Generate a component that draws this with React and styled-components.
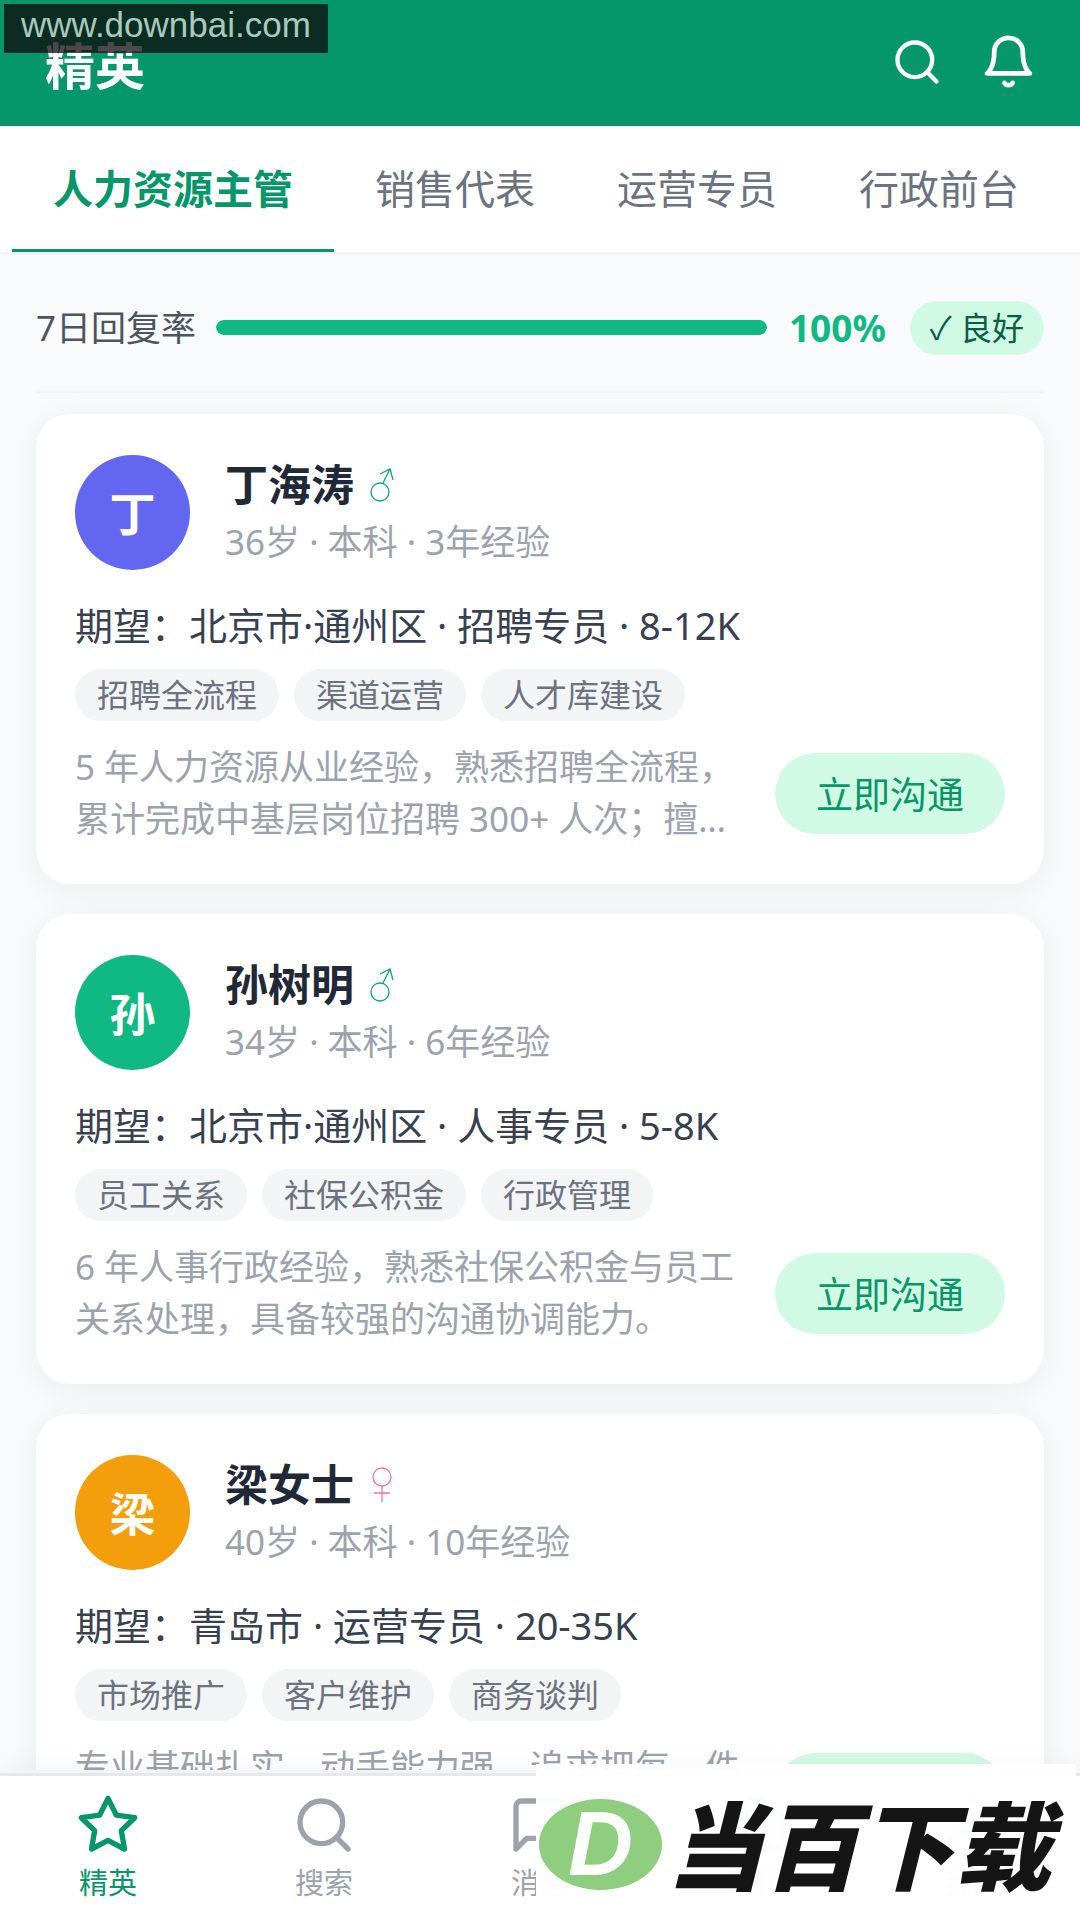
import React, { useState } from 'react';
import styled, { createGlobalStyle } from 'styled-components';

const GlobalStyle = createGlobalStyle`
  * {
    box-sizing: border-box;
  }

  body {
    margin: 0;
    background: #f9fafc;
    font-family: 'Noto Sans', 'Noto Sans CJK SC', sans-serif;
  }

  button {
    font-family: inherit;
    border: none;
    padding: 0;
    background: none;
    cursor: pointer;
  }

  h1,
  h2,
  p,
  ul {
    margin: 0;
    padding: 0;
  }
`;

const Page = styled.div`
  position: relative;
  height: 100vh;
  display: flex;
  flex-direction: column;
  overflow: hidden;
`;

const Header = styled.header`
  flex: none;
  display: flex;
  align-items: center;
  justify-content: space-between;
  height: 126px;
  padding: 0 43px 3px 45px;
  background: #059669;
  color: #fff;

  h1 {
    padding-top: 8px;
    font-size: 50px;
    line-height: 72px;
    font-weight: 700;
  }
`;

const HeaderActions = styled.div`
  display: flex;
  align-items: center;
  gap: 37px;

  button {
    display: flex;
    color: #fff;
  }
`;

const Tabs = styled.nav`
  flex: none;
  display: flex;
  height: 129px;
  padding: 0 12px;
  background: #fff;
  border-bottom: 3px solid #f3f4f6;
`;

const Tab = styled.button`
  flex: none;
  padding: 0 41px;
  font-size: 40px;
  line-height: 60px;
  white-space: nowrap;
  font-weight: ${({ $active }) => ($active ? 700 : 400)};
  color: ${({ $active }) => ($active ? '#059669' : '#6b7280')};
  border-top: 3px solid transparent;
  border-bottom: 3px solid ${({ $active }) => ($active ? '#059669' : 'transparent')};
`;

const Content = styled.main`
  flex: 1;
  min-height: 0;
  overflow: hidden;
  padding: 0 36px;
`;

const ReplyRate = styled.section`
  display: flex;
  align-items: center;
  height: 138px;
  padding-top: 15px;
  padding-bottom: 5px;
  margin-bottom: 21px;
  border-bottom: 3px solid #f3f4f6;
  font-size: 35px;
  line-height: 52px;
  color: #4b5563;
  white-space: nowrap;

  strong {
    margin-right: 24px;
    font-size: 37px;
    color: #10b981;
  }
`;

const Track = styled.div`
  flex: 1;
  height: 15px;
  margin: 0 22px 0 20px;
  border-radius: 8px;
  background: #e5e7eb;
  overflow: hidden;
`;

const Fill = styled.div`
  height: 100%;
  border-radius: 8px;
  background: #10b981;
`;

const Badge = styled.span`
  padding: 0 20px;
  border-radius: 27px;
  background: #d1fae5;
  color: #065f46;
  font-size: 32px;
  line-height: 54px;
`;

const List = styled.div`
  display: flex;
  flex-direction: column;
  gap: 30px;
`;

const Card = styled.article`
  padding: 41px 39px 39px;
  border-radius: 34px;
  background: #fff;
  box-shadow: 0 6px 34px rgba(0, 0, 0, 0.06);
`;

const CardHead = styled.div`
  display: flex;
  align-items: center;
  gap: 35px;
`;

const Avatar = styled.div`
  flex: none;
  display: flex;
  align-items: center;
  justify-content: center;
  width: 115px;
  height: 115px;
  border-radius: 50%;
  background: ${({ $color }) => $color};
  color: #fff;
  font-size: 46px;
  line-height: 60px;
  font-weight: 700;
`;

const Name = styled.h2`
  display: flex;
  align-items: center;
  gap: 16px;
  font-size: 43px;
  line-height: 59px;
  color: #1f2937;
`;

const GenderMark = styled.svg`
  width: 24px;
  height: 35px;
  fill: none;
  stroke: ${({ $female }) => ($female ? '#f472a6' : '#10a67c')};
  stroke-width: 1.3;
`;

const Meta = styled.p`
  font-size: 35px;
  line-height: 56px;
  color: #9ca3af;
`;

const Expect = styled.p`
  margin-top: 27px;
  font-size: 38px;
  line-height: 56px;
  color: #374151;
`;

const Tags = styled.ul`
  display: flex;
  flex-wrap: wrap;
  gap: 15px;
  margin-top: 16px;
  list-style: none;

  li {
    padding: 0 22px;
    border-radius: 26px;
    background: #f3f4f6;
    color: #6b7280;
    font-size: 32px;
    line-height: 52px;
  }
`;

const CardFoot = styled.div`
  display: flex;
  align-items: center;
  justify-content: space-between;
  gap: 29px;
  margin-top: 20px;
`;

const Intro = styled.p`
  flex: 1;
  display: -webkit-box;
  -webkit-box-orient: vertical;
  -webkit-line-clamp: 2;
  overflow: hidden;
  font-size: 35px;
  line-height: 52px;
  color: #9ca3af;
`;

const ChatButton = styled.button`
  flex: none;
  height: 81px;
  padding: 0 41px;
  border-radius: 41px;
  background: #d1fae5;
  color: #059669;
  font-size: 37px;
`;

const BottomNav = styled.nav`
  position: relative;
  flex: none;
  display: flex;
  height: 147px;
  margin-top: 3px;
  padding-top: 17px;
  background: #fff;
  border-top: 3px solid #e5e7eb;
  box-shadow: 0 -3px 29px rgba(0, 0, 0, 0.05);
`;

const NavItem = styled.a`
  flex: 1;
  display: flex;
  flex-direction: column;
  align-items: center;
  gap: 5px;
  font-size: 29px;
  line-height: 42px;
  text-decoration: none;
  color: ${({ $active }) => ($active ? '#059669' : '#9ca3af')};
`;

const SiteMark = styled.div`
  position: absolute;
  top: 4px;
  left: 4px;
  width: 324px;
  height: 49px;
  padding-left: 17px;
  background: rgba(12, 4, 8, 0.73);
  color: #a9c9bd;
  font-family: 'Liberation Sans', Arial, sans-serif;
  font-size: 35px;
  line-height: 41px;
`;

const BrandMark = styled.div`
  position: absolute;
  right: 4px;
  bottom: 4px;
  display: flex;
  align-items: center;
  gap: 5px;
  width: 540px;
  height: 152px;
  padding: 8px 0 0 3px;
  background: rgba(255, 255, 255, 0.96);
`;

const BrandBadge = styled.span`
  flex: none;
  display: flex;
  align-items: center;
  justify-content: center;
  width: 123px;
  height: 91px;
  border-radius: 50%;
  background: #8fce7e;
  color: #fff;
  font: italic 700 90px 'Liberation Sans', Arial, sans-serif;
`;

const BrandName = styled.span`
  padding-bottom: 4px;
  font-family: 'Noto Sans CJK SC', sans-serif;
  font-size: 96px;
  line-height: 96px;
  font-weight: 900;
  font-style: italic;
  white-space: nowrap;
  color: #151515;
`;

const shapes = {
  search: (
    <>
      <circle cx="11" cy="11" r="8" />
      <path d="M21 21l-4.35-4.35" />
    </>
  ),
  bell: (
    <>
      <path d="M18 8A6 6 0 0 0 6 8c0 7-3 9-3 9h18s-3-2-3-9" />
      <path d="M13.73 21a2 2 0 0 1-3.46 0" />
    </>
  ),
  star: (
    <polygon points="12 2 15.09 8.26 22 9.27 17 14.14 18.18 21.02 12 17.77 5.82 21.02 7 14.14 2 9.27 8.91 8.26 12 2" />
  ),
  message: (
    <path d="M21 15a2 2 0 0 1-2 2H7l-4 4V5a2 2 0 0 1 2-2h14a2 2 0 0 1 2 2z" />
  ),
  briefcase: (
    <>
      <rect x="2" y="7" width="20" height="14" rx="2" />
      <path d="M16 21V5a2 2 0 0 0-2-2h-4a2 2 0 0 0-2 2v16" />
    </>
  ),
  user: (
    <>
      <path d="M20 21v-2a4 4 0 0 0-4-4H8a4 4 0 0 0-4 4v2" />
      <circle cx="12" cy="7" r="4" />
    </>
  ),
};

const Icon = ({ name, size }) => (
  <svg
    width={size}
    height={size}
    viewBox="0 0 24 24"
    fill="none"
    stroke="currentColor"
    strokeWidth="2"
    strokeLinecap="round"
    strokeLinejoin="round"
    aria-hidden="true"
  >
    {shapes[name]}
  </svg>
);

const Gender = ({ female }) => (
  <GenderMark
    $female={female}
    viewBox="0 0 24 35"
    role="img"
    aria-label={female ? '女' : '男'}
  >
    {female ? (
      <>
        <circle cx="12" cy="10" r="9" />
        <path d="M12 19v16M4 26h16" />
      </>
    ) : (
      <>
        <circle cx="10" cy="25" r="9" />
        <path d="M13 16L20 2M10 7L20 2L23 13" />
      </>
    )}
  </GenderMark>
);

const tabs = ['人力资源主管', '销售代表', '运营专员', '行政前台'];

const candidates = [
  {
    name: '丁海涛',
    initial: '丁',
    color: '#6366f1',
    meta: '36岁 · 本科 · 3年经验',
    expect: '期望：北京市·通州区 · 招聘专员 · 8-12K',
    tags: ['招聘全流程', '渠道运营', '人才库建设'],
    intro:
      '5 年人力资源从业经验，熟悉招聘全流程，累计完成中基层岗位招聘 300+ 人次；擅长渠道运营与人才库建设。',
  },
  {
    name: '孙树明',
    initial: '孙',
    color: '#10b981',
    meta: '34岁 · 本科 · 6年经验',
    expect: '期望：北京市·通州区 · 人事专员 · 5-8K',
    tags: ['员工关系', '社保公积金', '行政管理'],
    intro:
      '6 年人事行政经验，熟悉社保公积金与员工关系处理，具备较强的沟通协调能力。',
  },
  {
    name: '梁女士',
    initial: '梁',
    color: '#f59e0b',
    female: true,
    meta: '40岁 · 本科 · 10年经验',
    expect: '期望：青岛市 · 运营专员 · 20-35K',
    tags: ['市场推广', '客户维护', '商务谈判'],
    intro: '专业基础扎实，动手能力强，追求把每一件事做好。',
  },
];

const navItems = [
  { icon: 'star', label: '精英' },
  { icon: 'search', label: '搜索' },
  { icon: 'message', label: '消息' },
  { icon: 'briefcase', label: '职位' },
  { icon: 'user', label: '我的' },
];

const CandidateCard = ({ person }) => (
  <Card>
    <CardHead>
      <Avatar $color={person.color}>{person.initial}</Avatar>
      <div>
        <Name>
          {person.name}
          <Gender female={person.female} />
        </Name>
        <Meta>{person.meta}</Meta>
      </div>
    </CardHead>
    <Expect>{person.expect}</Expect>
    <Tags>
      {person.tags.map((tag) => (
        <li key={tag}>{tag}</li>
      ))}
    </Tags>
    <CardFoot>
      <Intro>{person.intro}</Intro>
      <ChatButton>立即沟通</ChatButton>
    </CardFoot>
  </Card>
);

const App = () => {
  const [tab, setTab] = useState(tabs[0]);
  const rate = 100;

  return (
    <Page lang="zh-CN">
      <GlobalStyle />
      <Header>
        <h1>精英</h1>
        <HeaderActions>
          <button aria-label="搜索">
            <Icon name="search" size={52} />
          </button>
          <button aria-label="通知">
            <Icon name="bell" size={57} />
          </button>
        </HeaderActions>
      </Header>

      <Tabs>
        {tabs.map((name) => (
          <Tab key={name} $active={name === tab} onClick={() => setTab(name)}>
            {name}
          </Tab>
        ))}
      </Tabs>

      <Content>
        <ReplyRate>
          <span>7日回复率</span>
          <Track>
            <Fill style={{ width: `${rate}%` }} />
          </Track>
          <strong>{rate}%</strong>
          <Badge>✓ 良好</Badge>
        </ReplyRate>
        <List>
          {candidates.map((person) => (
            <CandidateCard key={person.name} person={person} />
          ))}
        </List>
      </Content>

      <BottomNav>
        {navItems.map((item, i) => (
          <NavItem key={item.label} href="#" $active={i === 0}>
            <Icon name={item.icon} size={64} />
            <span>{item.label}</span>
          </NavItem>
        ))}
      </BottomNav>

      <SiteMark>www.downbai.com</SiteMark>
      <BrandMark>
        <BrandBadge>D</BrandBadge>
        <BrandName>当百下载</BrandName>
      </BrandMark>
    </Page>
  );
};

export default App;
